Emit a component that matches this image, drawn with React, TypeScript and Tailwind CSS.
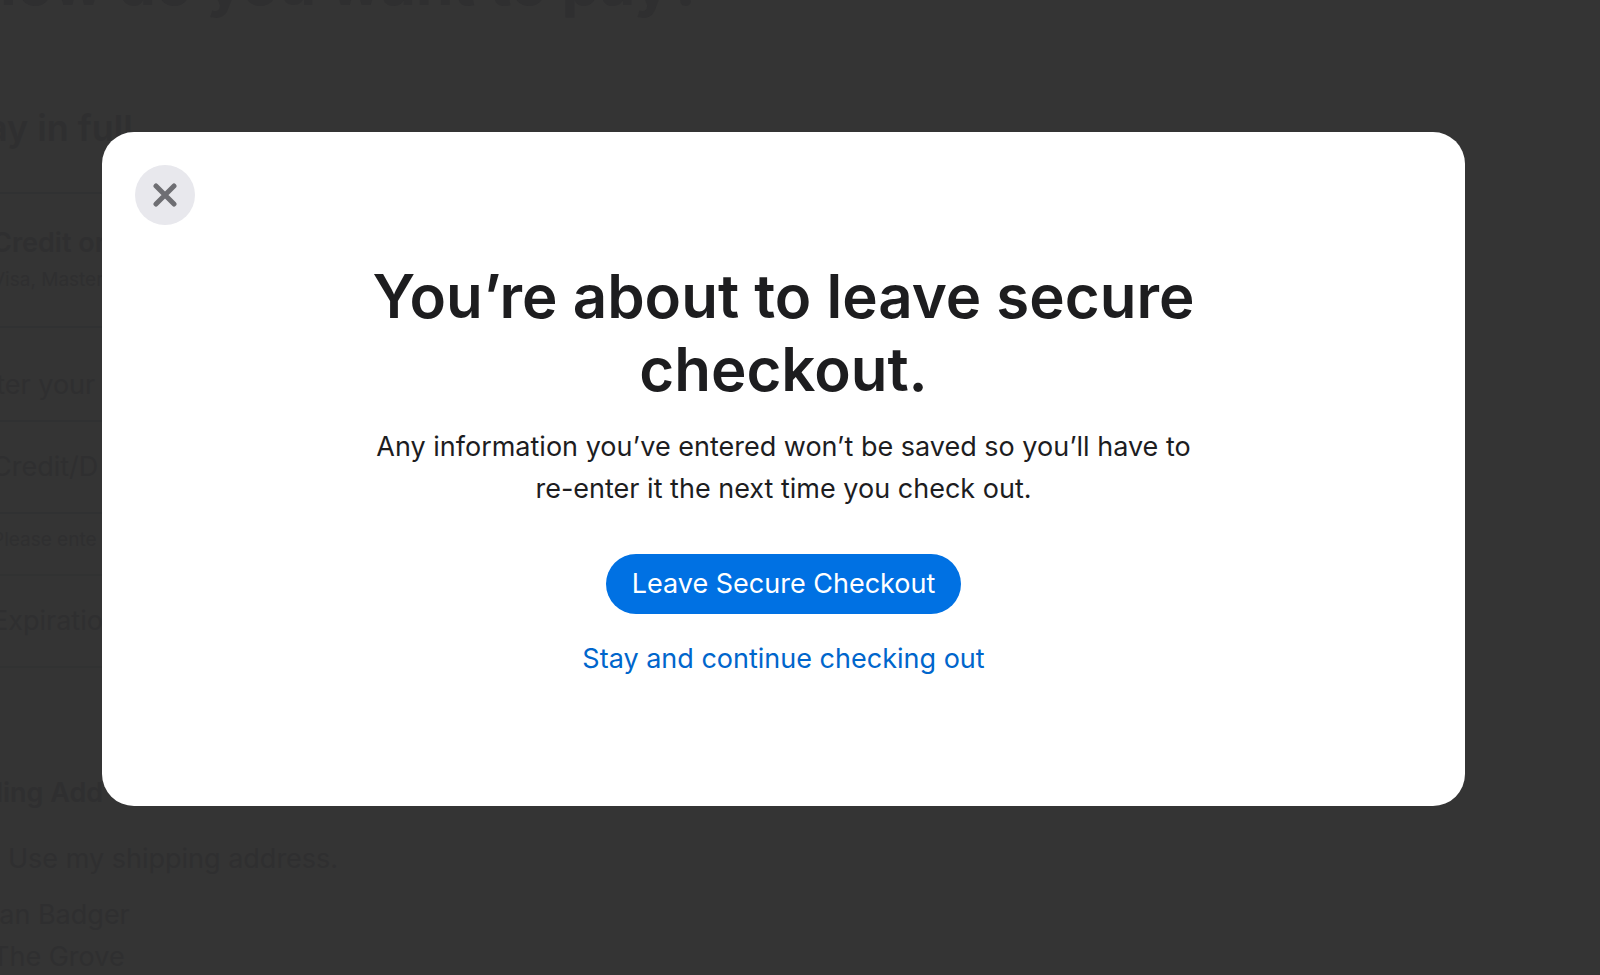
const PaymentPage = () => {
  return (
    <main
      className="-ml-9 max-w-[1400px] text-[27px] leading-[42px] whitespace-nowrap text-[#2f2f30]"
      aria-hidden="true"
    >
      <h1 className="-mt-[57px] pl-2 text-[60px] leading-20 font-bold">How do you want to pay?</h1>

      <section>
        <h2 className="mt-[81px] text-[36px] leading-12 font-semibold">Pay in full</h2>
        <div className="mt-10 border-y-2 border-[#303132] pt-7 pb-[30px] pl-7">
          <p className="font-semibold">Credit or</p>
          <p className="text-[19px] leading-8">Visa, Master</p>
        </div>
        <p className="border-b-2 border-[#303132] pt-9 pb-3.5">Enter your</p>
        <p className="border-b-2 border-[#303132] py-6 pl-7">Credit/D</p>
        <p className="border-b-2 border-[#313232] pt-2.5 pb-4.5 pl-7 text-[19px] leading-8">Please ente</p>
        <p className="border-b-2 border-[#313232] py-6 pl-7">Expiratio</p>
      </section>

      <section>
        <h2 className="mt-26 font-semibold">Billing Add</h2>
        <p className="mt-6 pl-11">Use my shipping address.</p>
        <address className="mt-3.5 pl-7 not-italic">
          <p>Ian Badger</p>
          <p>The Grove</p>
        </address>
      </section>
    </main>
  );
};

const LeaveCheckoutModal = () => {
  return (
    <div className="fixed inset-0 pt-33 pr-[135px] pl-[102px]">
      <div
        role="dialog"
        aria-modal="true"
        aria-labelledby="leave-title"
        className="rounded-[32px] bg-white px-[33px] pt-[33px] pb-[126px] text-[27px] leading-[42px] text-[#1d1d1f]"
      >
        <button
          type="button"
          aria-label="Close"
          className="flex size-15 items-center justify-center rounded-full bg-[#e8e8ed] text-[#6e6e73]"
        >
          <svg className="size-6" viewBox="0 0 24 24" fill="none" stroke="currentColor" strokeWidth="5" strokeLinecap="round">
            <path d="M3 3l18 18M21 3l-18 18" />
          </svg>
        </button>

        <div className="mx-auto mt-[35px] flex max-w-[840px] flex-col items-center text-center">
          <h2 id="leave-title" className="text-[60px] leading-[73px] font-semibold">
            You’re about to leave secure checkout.
          </h2>
          <p className="mt-5">
            Any information you’ve entered won’t be saved so you’ll have to re-enter it the next time you check out.
          </p>
          <button type="button" className="mt-11 h-15 rounded-full bg-[#0071e3] px-[26px] text-white">
            Leave Secure Checkout
          </button>
          <button type="button" className="mt-6 text-[#0066cc]">
            Stay and continue checking out
          </button>
        </div>
      </div>
    </div>
  );
};

const App = () => {
  return (
    <div className="h-screen overflow-hidden bg-[#343434] font-[Inter,sans-serif]">
      <PaymentPage />
      <LeaveCheckoutModal />
    </div>
  );
};

export default App;
